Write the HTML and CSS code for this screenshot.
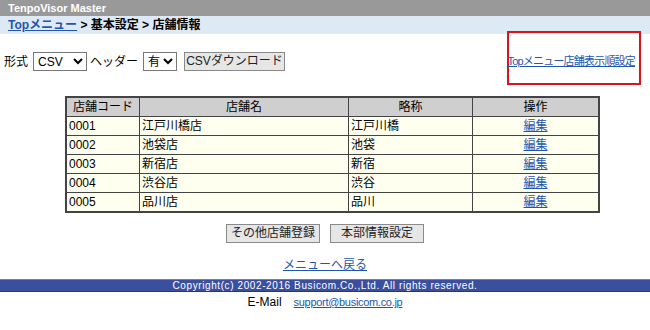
FILE: index.html
```html
<!DOCTYPE html>
<html lang="ja">
<head>
  <meta charset="utf-8">
  <title>TenpoVisor Master</title>
  <link rel="stylesheet" href="styles.css">
</head>
<body>
  <div class="title-bar">TenpoVisor Master</div>
  <div class="crumb"><a href="">Topメニュー</a> &gt; 基本設定 &gt; 店舗情報</div>
  <div class="toolbar">
    <form class="export">
      <span>形式</span>
      <select class="sel-format"><option>CSV</option></select>
      <span>ヘッダー</span>
      <select class="sel-header"><option>有</option></select>
      <button type="button" class="btn btn-csv">CSVダウンロード</button>
    </form>
    <div class="order-box"><a href="">Topメニュー店舗表示順設定</a></div>
  </div>
  <table class="shops">
    <tr>
      <th class="c-code">店舗コード</th>
      <th class="c-name">店舗名</th>
      <th class="c-short">略称</th>
      <th class="c-op">操作</th>
    </tr>
    <tr><td>0001</td><td>江戸川橋店</td><td>江戸川橋</td><td class="op"><a href="">編集</a></td></tr>
    <tr><td>0002</td><td>池袋店</td><td>池袋</td><td class="op"><a href="">編集</a></td></tr>
    <tr><td>0003</td><td>新宿店</td><td>新宿</td><td class="op"><a href="">編集</a></td></tr>
    <tr><td>0004</td><td>渋谷店</td><td>渋谷</td><td class="op"><a href="">編集</a></td></tr>
    <tr><td>0005</td><td>品川店</td><td>品川</td><td class="op"><a href="">編集</a></td></tr>
  </table>
  <div class="actions">
    <button type="button" class="btn btn-wide">その他店舗登録</button>
    <button type="button" class="btn btn-wide">本部情報設定</button>
  </div>
  <p class="back"><a href="">メニューへ戻る</a></p>
  <div class="footer">Copyright(c) 2002-2016 Busicom.Co.,Ltd. All rights reserved.</div>
  <p class="mail">E-Mail<a href="">support@busicom.co.jp</a></p>
</body>
</html>
```

FILE: styles.css
```css
body {
  margin: 0;
  font-family: "Liberation Sans", "Noto Sans CJK JP", sans-serif;
  font-size: 12px;
  line-height: 16px;
  color: #000;
  background-color: #fff;
  position: relative;
}
a {
  color: #1f56b0;
}
.title-bar {
  height: 16px;
  line-height: 16px;
  padding-left: 8px;
  background-color: #999;
  color: #fff;
  font-size: 11px;
  font-weight: bold;
}
.crumb {
  height: 18px;
  line-height: 18px;
  padding-left: 8px;
  background-color: #dde9f5;
  font-weight: bold;
}
.crumb a {
  color: #1f56b0;
}
.toolbar {
  display: flex;
  justify-content: space-between;
  padding: 18px 4px 0;
  height: 19px;
}
.export {
  display: flex;
  align-items: center;
  gap: 3px;
  margin: 0;
  height: 19px;
}
.export select {
  height: 19px;
  font-family: inherit;
  font-size: 12px;
  border: 1px solid #777;
  border-radius: 0;
  background-color: #fff;
  padding: 0;
  margin: 0 0 0 2px;
}
.sel-format {
  width: 54px;
}
.sel-header {
  width: 34px;
}
.btn {
  height: 19px;
  font-family: inherit;
  font-size: 12px;
  line-height: 17px;
  background-color: #e6e6e6;
  border: 1px solid #8a8a8a;
  border-radius: 0;
  padding: 0;
  color: #222;
}
.btn-csv {
  width: 101px;
  margin-left: 4px;
}
/* 赤枠は注記として重ねる */
.order-box {
  position: absolute;
  top: 31px;
  right: 9px;
  width: 126px;
  height: 50px;
  border: 2px solid #d8141e;
  display: flex;
  align-items: center;
  justify-content: flex-end;
  padding: 0 4px 0 0;
}
.order-box a {
  position: relative;
  top: 3px;
  font-size: 11px;
  white-space: nowrap;
  letter-spacing: -0.8px;
}
.shops {
  margin: 25px 0 0 65px;
  width: 535px;
  border-collapse: collapse;
  border: 2px solid #444;
  font-size: 12px;
}
.shops th,
.shops td {
  border: 1px solid #444;
  height: 18px;
  padding: 0 2px;
  line-height: 16px;
}
.shops th {
  background-color: #cfcfcf;
  font-weight: normal;
}
.shops td {
  background-color: #fffff0;
}
.c-code { width: 68px; }
.c-name { width: 204px; }
.c-short { width: 119px; }
.shops td.op {
  text-align: center;
}
.actions {
  display: flex;
  justify-content: center;
  gap: 10px;
  margin: 11px 0 0;
}
.btn-wide {
  width: 94px;
}
.back {
  margin: 14px 0 0;
  text-align: center;
  line-height: 16px;
}
.footer {
  margin-top: 6px;
  height: 11px;
  line-height: 11px;
  background-color: #3b4f9f;
  border-top: 1px solid #6d7dc4;
  border-bottom: 1px solid #27357a;
  color: #fff;
  text-align: center;
  font-size: 10px;
  letter-spacing: 0.6px;
}
.mail {
  margin: 2px 0 0;
  text-align: center;
  line-height: 16px;
}
.mail a {
  margin-left: 12px;
  font-size: 11px;
  letter-spacing: -0.3px;
}
```
